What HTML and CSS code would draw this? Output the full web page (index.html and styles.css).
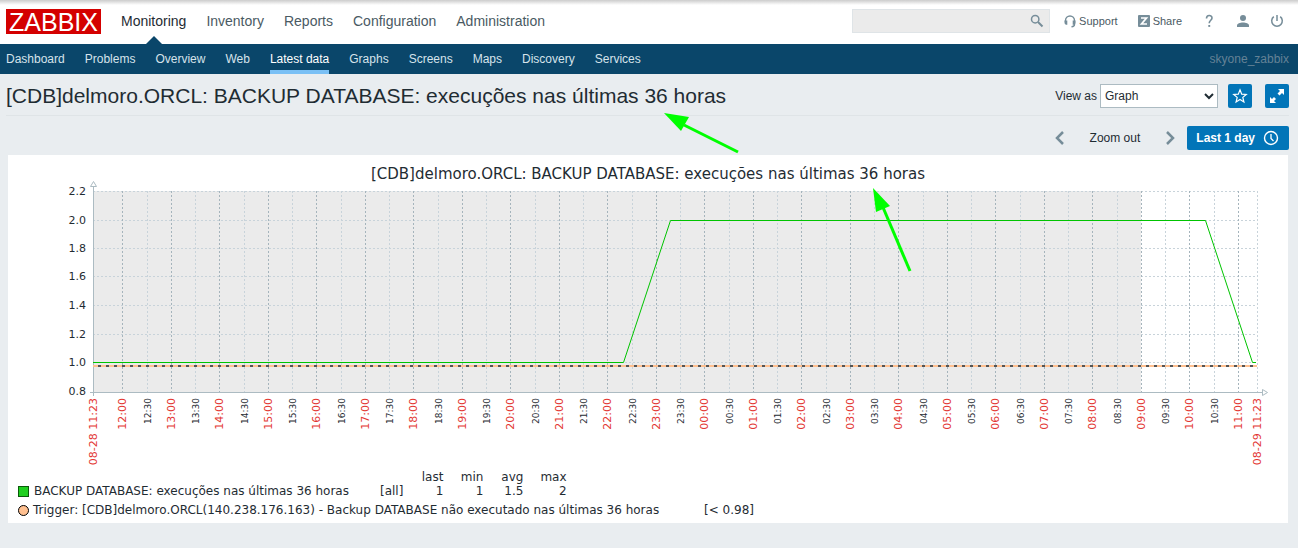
FILE: index.html
```
<!DOCTYPE html>
<html lang="en">
  <head>
    <meta charset="utf-8" />
    <meta name="viewport" content="width=device-width, initial-scale=1.0" />
    <title>Zabbix: Latest data</title>
    <link rel="stylesheet" href="styles.css">
  </head>
  <body>
    <header>
      <div class="top-nav">
        <a class="logo" href="#">ZABBIX</a>
        <nav class="main-menu">
          <a class="selected" href="#">Monitoring</a>
          <a href="#">Inventory</a>
          <a href="#">Reports</a>
          <a href="#">Configuration</a>
          <a href="#">Administration</a>
        </nav>
        <form class="search">
          <input type="text" aria-label="Search">
          <button type="button" aria-label="Search">
            <svg width="14" height="14" viewBox="0 0 14 14"><circle cx="5.2" cy="5.2" r="3.7" fill="none" stroke="#768d99" stroke-width="1.5"/><path d="M8 8l4.5 4.5" stroke="#768d99" stroke-width="2"/></svg>
          </button>
        </form>
        <div class="user-links">
          <a class="support" href="#">
            <svg width="12" height="13" viewBox="0 0 12 13"><path d="M1.5 7V5.5a4.5 4.5 0 0 1 9 0V9.500q0 2-3 2.300" fill="none" stroke="#768d99" stroke-width="1.400"/><path d="M.5 5.500h2.800v4.200H2q-1.500-.4-1.500-2zM11.500 5.500H8.700v4.200H10q1.500-.4 1.500-2z" fill="#768d99"/></svg>
            Support
          </a>
          <a class="share" href="#">
            <svg width="12" height="12" viewBox="0 0 12 12"><rect width="12" height="12" rx="1" fill="#768d99"/><path d="M3 3h5.500L3.500 9H9" fill="none" stroke="#fff" stroke-width="1.700"/></svg>
            Share
          </a>
          <a class="icon" href="#" aria-label="Help">
            <svg width="14" height="14" viewBox="0 0 14 14"><path d="M4.500 4.500C4.500 .6 10 .6 10 4c0 2.300-2.800 2.300-2.800 5.300" fill="none" stroke="#768d99" stroke-width="1.600"/><path d="M6.300 11h1.900v1.900H6.300z" fill="#768d99"/></svg>
          </a>
          <a class="icon" href="#" aria-label="User">
            <svg width="14" height="14" viewBox="0 0 14 14"><circle cx="7" cy="4" r="3" fill="#768d99"/><path d="M1 13v-1.500C1 9.500 4 8.500 7 8.500s6 1 6 3V13z" fill="#768d99"/></svg>
          </a>
          <a class="icon" href="#" aria-label="Sign out">
            <svg width="14" height="14" viewBox="0 0 14 14"><path d="M3.800 2.700a5.300 5.300 0 1 0 6.400 0M7 1v6" fill="none" stroke="#768d99" stroke-width="1.500"/></svg>
          </a>
        </div>
      </div>
      <div class="sub-nav">
        <nav>
          <a href="#">Dashboard</a>
          <a href="#">Problems</a>
          <a href="#">Overview</a>
          <a href="#">Web</a>
          <a class="selected" href="#">Latest data</a>
          <a href="#">Graphs</a>
          <a href="#">Screens</a>
          <a href="#">Maps</a>
          <a href="#">Discovery</a>
          <a href="#">Services</a>
        </nav>
        <span class="server-name">skyone_zabbix</span>
      </div>
    </header>

    <main>
      <div class="header-title">
        <h1>[CDB]delmoro.ORCL: BACKUP DATABASE: execuções nas últimas 36 horas
          <svg class="arrow" width="76" height="42" viewBox="0 0 76 42"><path d="M20 12l54 27" stroke="#0f0" stroke-width="3"/><path d="M0 0l25 4-8 14z" fill="#0f0"/></svg>
        </h1>
        <form class="view-as">
          <label for="action">View as</label>
          <select id="action">
            <option>Graph</option>
            <option>Values</option>
            <option>500 latest values</option>
          </select>
          <button class="btn-icon btn-fav" type="button" aria-label="Add to favourites">
            <svg width="16" height="16" viewBox="0 0 16 16"><path d="M8 1.800l1.700 4.300 4.600.3-3.500 3 1.100 4.500L8 11.400l-3.900 2.500 1.100-4.500-3.500-3 4.600-.3z" fill="none" stroke="#fff" stroke-width="1.200"/></svg>
          </button>
          <button class="btn-icon" type="button" aria-label="Fullscreen">
            <svg width="16" height="16" viewBox="0 0 16 16"><path d="M9 1h6v6l-2-2-2.500 2.500-2-2L11 3zM1 9l2 2 2-2 2 2-2 2 2 2H1z" fill="#fff"/></svg>
          </button>
        </form>
      </div>

      <div class="time-filter">
        <button class="btn-time" type="button" aria-label="Previous period">
          <svg width="10" height="14" viewBox="0 0 10 14"><path d="M8 1L2 7l6 6" fill="none" stroke="#768d99" stroke-width="2.500"/></svg>
        </button>
        <button class="btn-time" type="button">Zoom out</button>
        <button class="btn-time" type="button" aria-label="Next period">
          <svg width="10" height="14" viewBox="0 0 10 14"><path d="M2 1l6 6-6 6" fill="none" stroke="#768d99" stroke-width="2.500"/></svg>
        </button>
        <button class="btn-period" type="button">
          Last 1 day
          <svg width="16" height="16" viewBox="0 0 16 16"><circle cx="8" cy="8" r="6.500" fill="none" stroke="#fff" stroke-width="1.400"/><path d="M8 4v4.500l2.500 2.500" fill="none" stroke="#fff" stroke-width="1.300"/></svg>
        </button>
      </div>

      <section class="graph">
        <svg id="chart" viewBox="0 0 1280 315"></svg>
        <table class="legend">
          <tr>
            <th></th><th></th><th>last</th><th>min</th><th>avg</th><th>max</th>
          </tr>
          <tr>
            <td><i class="item-mark"></i>BACKUP DATABASE: execuções nas últimas 36 horas</td>
            <td>[all]</td><td>1</td><td>1</td><td>1.5</td><td>2</td>
          </tr>
        </table>
        <p class="trigger">
          <i class="trigger-mark"></i>
          <span class="trigger-name">Trigger: [CDB]delmoro.ORCL(140.238.176.163) - Backup DATABASE não executado nas últimas 36 horas</span>
          <span>[&lt; 0.98]</span>
        </p>
      </section>
    </main>

    <script src="chart.js"></script>
  </body>
</html>
```
FILE: styles.css
```
* {
  box-sizing: border-box;
}
body {
  margin: 0;
  background: #e9edf0;
  color: #1f2c33;
  font: 12px/16px Arial, "Liberation Sans", sans-serif;
}
a {
  color: inherit;
  text-decoration: none;
}
button {
  padding: 0;
  border: 0;
  background: none;
  color: inherit;
  font: inherit;
}
svg {
  display: block;
}

/* header */
.top-nav {
  display: flex;
  align-items: center;
  height: 44px;
  padding: 0 14px 2px 6px;
  background: linear-gradient(#ccc, #fff 5px);
}
.logo {
  width: 95px;
  height: 25px;
  background: #d40000;
  color: #fff;
  font-size: 25px;
  line-height: 26px;
  text-align: center;
}
.main-menu {
  display: flex;
  gap: 20px;
  margin-left: 20px;
  color: #4a5a63;
  font-size: 14px;
  line-height: 42px;
}
.main-menu .selected {
  position: relative;
  color: #1f2c33;
}
.main-menu .selected::after {
  content: "";
  position: absolute;
  left: 50%;
  bottom: -2px;
  margin-left: -8px;
  border: 8px solid transparent;
  border-top: 0;
  border-bottom-color: #0a466a;
}
.search {
  display: flex;
  width: 198px;
  height: 24px;
  margin-left: auto;
  padding-right: 5px;
  border: 1px solid #dfe4e7;
  background: #ebebeb;
}
.search input {
  flex: 1;
  min-width: 0;
  border: 0;
  background: none;
  font: inherit;
}
.user-links {
  display: flex;
  align-items: center;
  gap: 20px;
  margin-left: 14px;
  color: #4a5a63;
  font-size: 11px;
}
.user-links a {
  display: flex;
  align-items: center;
  gap: 3px;
}
.sub-nav {
  display: flex;
  justify-content: space-between;
  height: 30px;
  padding: 0 9px 0 6px;
  background: #0a466a;
  color: #d6e3eb;
  line-height: 30px;
}
.sub-nav nav {
  display: flex;
  gap: 20px;
}
.sub-nav .selected {
  border-bottom: 4px solid #7ac0f5;
  color: #fff;
}
.server-name {
  color: #648296;
}

/* page title and time filter */
.header-title {
  display: flex;
  align-items: center;
  justify-content: space-between;
  height: 42px;
  margin: 0 9px 0 6px;
  padding-top: 2px;
  border-bottom: 1px solid #dfe4e7;
}
h1 {
  position: relative;
  margin: 0;
  font-size: 21px;
  font-weight: normal;
  line-height: 26px;
}
.arrow {
  position: absolute;
  right: -14px;
  top: 30px;
}
.view-as {
  display: flex;
  align-items: center;
}
.view-as select {
  width: 118px;
  height: 24px;
  margin: 0 10px 0 3px;
  border: 1px solid #acbbc2;
  background: #fff;
  color: #1f2c33;
  font: inherit;
}
.btn-icon {
  display: grid;
  place-items: center;
  width: 24px;
  height: 24px;
  border-radius: 2px;
  background: #0275b8;
}
.btn-fav {
  margin-right: 13px;
}
.time-filter {
  display: flex;
  justify-content: flex-end;
  gap: 25px;
  padding: 10px 9px 5px;
}
.btn-period {
  display: flex;
  align-items: center;
  gap: 8px;
  height: 24px;
  margin-left: -13px;
  padding: 0 10px 0 9px;
  border-radius: 2px;
  background: #0275b8;
  color: #fff;
  font-weight: bold;
}

/* graph */
.graph {
  margin: 0 10px 25px 8px;
  padding-bottom: 5px;
  background: #fff;
  font-family: "DejaVu Sans", sans-serif;
}
#chart {
  width: 100%;
  fill: #1f2c33;
  font-size: 11px;
}
.chart-title {
  font-size: 15px;
  text-anchor: middle;
}
.work-time {
  fill: #ebebeb;
}
.grid {
  stroke: #c8d3da;
  stroke-dasharray: 2 2;
}
.grid-main {
  stroke: #a5b4bc;
}
.axis {
  fill: #fff;
  stroke: #acbbc2;
}
.label {
  text-anchor: end;
}
.label-main {
  fill: #e33734;
}
.label-half {
  font-size: 9px;
}
.threshold {
  stroke: #ffc090;
  stroke-width: 2;
}
.threshold-dash {
  stroke: #555;
  stroke-width: 2;
  stroke-dasharray: 3 5;
}
.series {
  fill: none;
  stroke: #00c400;
}
.legend {
  border-spacing: 0;
  font-size: 12px;
  line-height: 14px;
}
.legend th,
.legend td {
  min-width: 40px;
  padding: 0 0 0 17px;
  font-weight: normal;
  text-align: right;
}
.legend td:first-child {
  display: flex;
  align-items: center;
  gap: 5px;
  min-width: 355px;
  padding-left: 10px;
}
.item-mark {
  width: 11px;
  height: 11px;
  border: 1px solid #0a5a0a;
  background: #1fcf1f;
}
.trigger {
  display: flex;
  align-items: center;
  gap: 4px;
  margin: 4px 0 0;
  padding-left: 10px;
  font-size: 12px;
}
.trigger-mark {
  width: 11px;
  height: 11px;
  border: 1px solid #000;
  border-radius: 50%;
  background: #ffc090;
}
.trigger-name {
  min-width: 667px;
}
```
FILE: chart.js
```
const chart = document.getElementById('chart');

const left = 85;
const right = 1249;
const top_ = 36;
const bottom = 237;
const start = 11 * 60 + 23;

function add(name, attrs, text){
  const el = document.createElementNS('http://www.w3.org/2000/svg', name);
  for( let key in attrs ){
    el.setAttribute(key, attrs[key]);
  }
  if( text ){
    el.textContent = text;
  }
  chart.appendChild(el);
}

function line(cls, x1, y1, x2, y2){
  add('line', { class: cls, x1: x1, y1: y1, x2: x2, y2: y2 });
}

function timeLabel(cls, x, text){
  add('text', { class: 'label ' + cls, transform: `translate(${x} 243) rotate(-90)` }, text);
}

// minutes from the start of the period to x
function toX(min){
  return left + Math.floor(min * (right - left) / 1440) + 0.5;
}

function toY(value){
  return Math.floor(207.5 - (value - 1) * 142.5) + 0.5;
}

add('text', { class: 'chart-title', x: 640, y: 24 }, '[CDB]delmoro.ORCL: BACKUP DATABASE: execuções nas últimas 36 horas');
add('rect', { class: 'work-time', x: left, y: top_, width: 1048, height: bottom - top_ });

// value scale
for( let i = 0; i < 8; i++ ){
  const value = (22 - i * 2) / 10;
  const y = i == 7 ? bottom - 0.5 : toY(value);
  if( i < 7 ){
    line('grid', left, y, right, y);
  }
  add('text', { class: 'label', x: 78, y: y + 3.5 }, value.toFixed(1));
}

// time scale
for( let t = 12 * 60; t < start + 1440; t += 30 ){
  const x = toX(t - start);
  const full = t % 60 == 0;
  const hour = String(Math.floor(t / 60) % 24).padStart(2, '0');
  line(full ? 'grid grid-main' : 'grid', x, top_, x, bottom);
  timeLabel(full ? 'label-main' : 'label-half', x + 3, hour + (full ? ':00' : ':30'));
}
line('grid', right + 0.5, top_, right + 0.5, bottom);
timeLabel('label-main', left + 4, '08-28 11:23');
timeLabel('label-main', right + 4, '08-29 11:23');

// axes
line('axis', left + 0.5, 31, left + 0.5, 241);
line('axis', left - 3, bottom + 0.5, right + 5, bottom + 0.5);
add('path', { class: 'axis', d: 'M82.5 31.500h6l-3-5z' });
add('path', { class: 'axis', d: 'M1254.5 234.500v6l5-3z' });

line('threshold', left, 211, right, 211);
line('threshold-dash', left + 5, 211, right, 211);
add('polyline', { class: 'series', points: '85,207.5 615.5,207.5 662.5,65.5 1197.5,65.5 1244.5,207.5 1248,207.5' });

// pointer to the title
add('path', { d: 'M874 50l28 66', stroke: '#0f0', 'stroke-width': 3 });
add('path', { d: 'M865 33l17 18-14 6z', fill: '#0f0' });
```
